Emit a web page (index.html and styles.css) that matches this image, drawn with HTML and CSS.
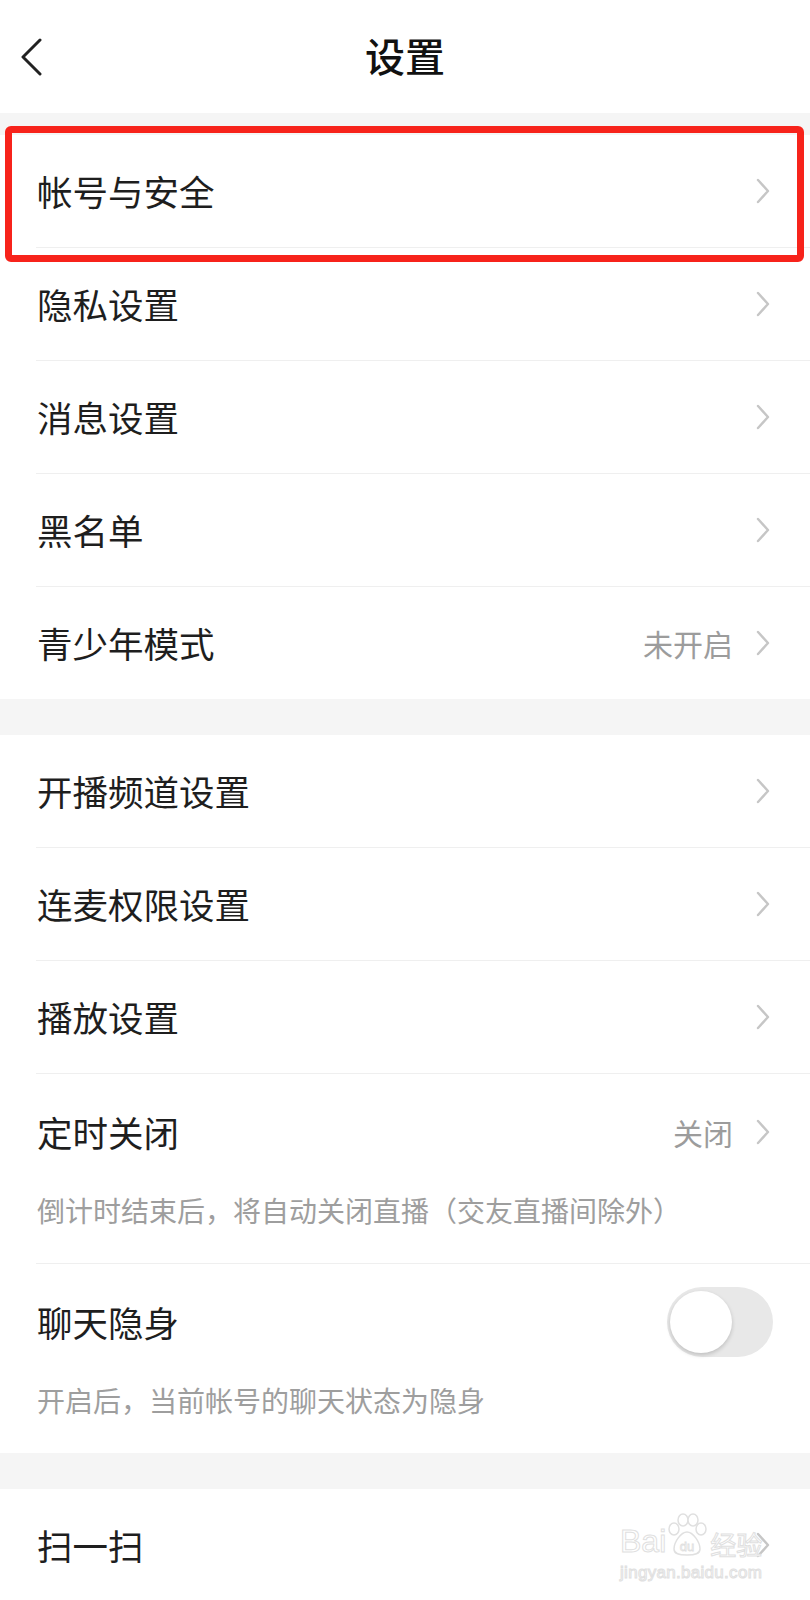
FILE: index.html
```html
<!DOCTYPE html>
<html lang="zh-CN">
  <head>
    <meta charset="UTF-8" />
    <meta name="viewport" content="width=device-width, initial-scale=1.0" />
    <title>设置</title>
    <link rel="stylesheet" href="styles.css">
  </head>
  <body>
    <div class="header">
      <div class="back">
        <svg width="24" height="40" viewBox="0 0 24 40">
          <polyline points="20,2 3,19 20,36" fill="none" stroke="#222" stroke-width="3" stroke-linecap="round" stroke-linejoin="round" />
        </svg>
      </div>
      <h1>设置</h1>
      <div></div>
    </div>

    <div class="group first">
      <div class="highlight"></div>
      <div class="row"><span class="label">帐号与安全</span><span class="arrow"></span></div>
      <div class="row"><span class="label">隐私设置</span><span class="arrow"></span></div>
      <div class="row"><span class="label">消息设置</span><span class="arrow"></span></div>
      <div class="row"><span class="label">黑名单</span><span class="arrow"></span></div>
      <div class="row"><span class="label">青少年模式</span><span class="value">未开启</span><span class="arrow"></span></div>
    </div>

    <div class="group">
      <div class="row"><span class="label">开播频道设置</span><span class="arrow"></span></div>
      <div class="row"><span class="label">连麦权限设置</span><span class="arrow"></span></div>
      <div class="row"><span class="label">播放设置</span><span class="arrow"></span></div>
      <div class="row tall">
        <div class="main"><span class="label">定时关闭</span><span class="value">关闭</span><span class="arrow"></span></div>
        <p class="hint">倒计时结束后，将自动关闭直播（交友直播间除外）</p>
      </div>
      <div class="row tall">
        <div class="main"><span class="label">聊天隐身</span><span class="switch"><span class="knob"></span></span></div>
        <p class="hint">开启后，当前帐号的聊天状态为隐身</p>
      </div>
    </div>

    <div class="group">
      <div class="watermark">
        <div class="wm-top">
          <span>Bai</span>
          <svg width="42" height="44" viewBox="0 0 42 44">
            <g fill="#fff" stroke="#e0e0e0" stroke-width="1.5">
              <ellipse cx="8" cy="16" rx="5" ry="6" />
              <ellipse cx="17" cy="7" rx="5" ry="6" />
              <ellipse cx="27" cy="7" rx="5" ry="6" />
              <ellipse cx="35" cy="16" rx="5" ry="6" />
              <path d="M21 19c-6 0-13 10-13 17 0 5 5 6 13 6s13-1 13-6c0-7-7-17-13-17z" />
            </g>
            <text x="21" y="38" text-anchor="middle" font-size="13" fill="#fff" stroke="#e0e0e0" stroke-width="0.8" font-family="Liberation Sans, sans-serif">du</text>
          </svg>
          <span>经验</span>
        </div>
        <div class="wm-url">jingyan.baidu.com</div>
      </div>
      <div class="row"><span class="label">扫一扫</span><span class="arrow"></span></div>
    </div>
  </body>
</html>
```

FILE: styles.css
```css
body {
  margin: 0;
  background: #f5f5f5;
  font-family: "Noto Sans CJK SC", "Noto Sans", sans-serif;
  color: #1e1e1e;
}

.header {
  height: 113px;
  background: #fff;
  display: grid;
  grid-template-columns: 1fr auto 1fr;
  align-items: center;
}

.back {
  padding-left: 20px;
  padding-top: 2px;
  display: flex;
}

.header h1 {
  margin: 0;
  font-size: 40px;
  font-weight: 500;
  color: #111;
  line-height: 1;
  padding-bottom: 4px;
}

.group {
  position: relative;
  background: #fff;
  margin-top: 36px;
}

.group.first {
  margin-top: 22px;
}

.row {
  height: 112px;
  margin-left: 36px;
  padding-left: 1px;
  padding-right: 40px;
  border-bottom: 1px solid #efefef;
  display: flex;
  align-items: center;
}

.row:last-child {
  border-bottom: none;
}

.label {
  flex: 1;
  font-size: 35.5px;
  line-height: 1;
}

.value {
  font-size: 30px;
  color: #9c9c9c;
  margin-right: 23px;
}

.arrow {
  width: 14px;
  height: 26px;
  background: no-repeat center / 14px 26px url("data:image/svg+xml,%3Csvg xmlns='http://www.w3.org/2000/svg' viewBox='0 0 14 26'%3E%3Cpolyline points='2,2 12,13 2,24' fill='none' stroke='%23c6c6c6' stroke-width='2.4' stroke-linecap='round' stroke-linejoin='round'/%3E%3C/svg%3E");
}

.row.tall {
  height: auto;
  display: block;
  padding-bottom: 33px;
}

.row.tall .main {
  height: 116px;
  display: flex;
  align-items: center;
}

.hint {
  margin: 0;
  font-size: 28px;
  line-height: 40px;
  color: #9e9e9e;
}

.switch {
  width: 106px;
  height: 70px;
  border-radius: 35px;
  background: #e8e8e8;
  margin-right: -3px;
  display: flex;
  align-items: center;
  padding-left: 3px;
  box-sizing: border-box;
}

.knob {
  width: 62px;
  height: 62px;
  border-radius: 50%;
  background: #fff;
  box-shadow: 0 2px 4px rgba(0, 0, 0, 0.18);
}

.highlight {
  position: absolute;
  left: 5px;
  top: -9px;
  width: 799px;
  height: 136px;
  box-sizing: border-box;
  border: 7px solid #f7231b;
  border-radius: 6px;
}

.watermark {
  position: absolute;
  left: 620px;
  top: 24px;
  color: #fff;
  -webkit-text-stroke: 1px #e0e0e0;
  font-family: "Liberation Sans", "Noto Sans CJK SC", sans-serif;
}

.wm-top {
  display: flex;
  align-items: flex-end;
  font-size: 32px;
  line-height: 1;
}

.wm-top span:last-child {
  font-family: "Noto Sans CJK SC", sans-serif;
  font-size: 26px;
  margin-left: 2px;
}

.wm-url {
  font-size: 17px;
  margin-top: 6px;
  letter-spacing: 0.3px;
}
```
